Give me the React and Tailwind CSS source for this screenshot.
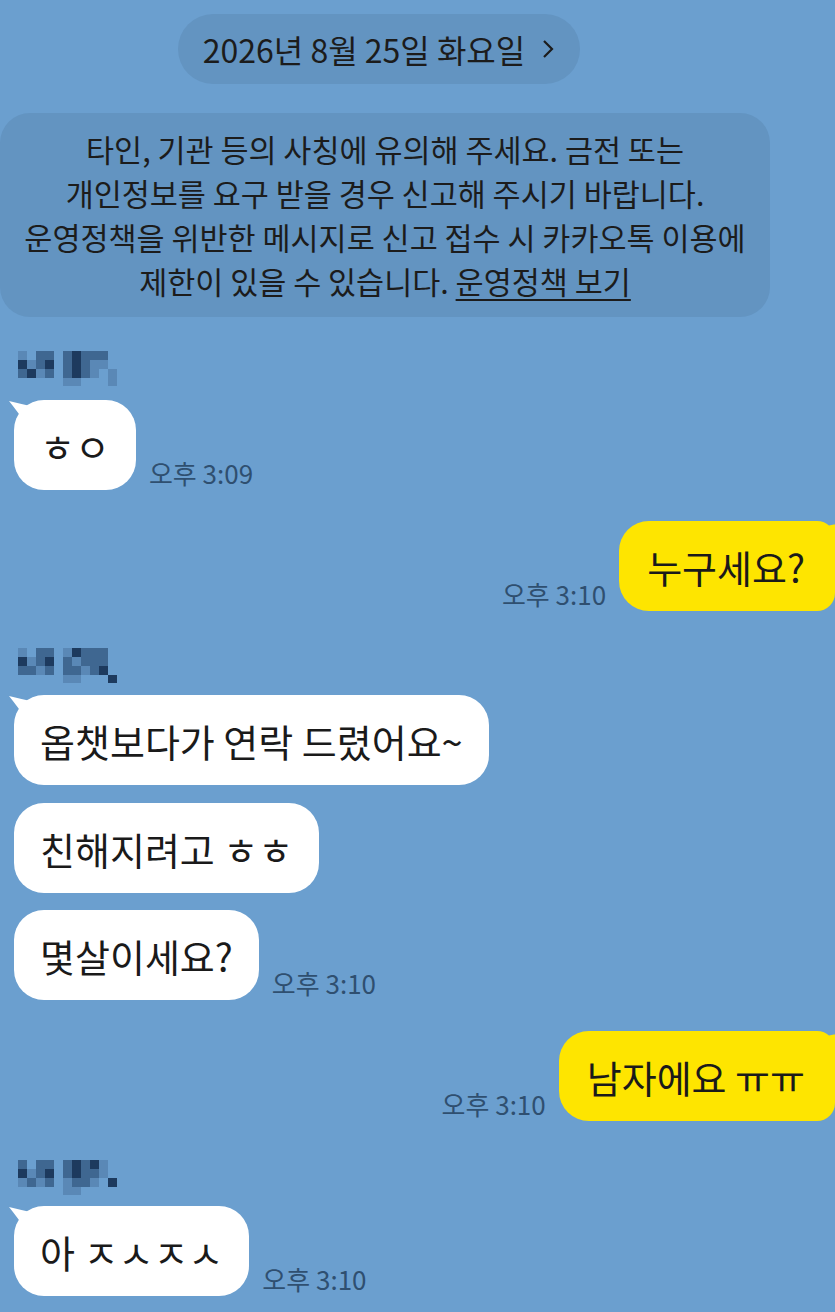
import React from 'react';

const FONT = { fontFamily: '"Noto Sans CJK KR", "Noto Sans", sans-serif' };

// mosaic name blocks (blurred sender name)
const C = {
  b: 'bg-[#6b9fcf]',
  l: 'bg-[#5a88b6]',
  m: 'bg-[#3f6791]',
  d: 'bg-[#1d3a5e]',
};

const names = [
  ['lbmmbmdmmmb', 'dlmdbmdmllb', 'mdlmbmdmlbl', 'bbbbbllbbbl'],
  ['lbmmbldmmmb', 'dlmdbmlmmmb', 'mmlmbmmlmdb', 'bbbbbllbbbd'],
  ['mbmmbmdmdlb', 'dlmdbmdmmlb', 'lmlmblmmlbd', 'bbbbbllbbbb'],
];

function Mosaic({ rows }) {
  return (
    <div className="flex flex-col ml-[18px]">
      {rows.map((r, i) => (
        <div key={i} className="flex">
          {r.split('').map((c, j) => (
            <div key={j} className={`w-[9px] ${i === 3 ? 'h-[8px]' : 'h-[9px]'} ${C[c]}`} />
          ))}
        </div>
      ))}
    </div>
  );
}

function Tail() {
  return (
    <svg className="absolute left-[-5px] top-[1px]" width="26" height="24" viewBox="0 0 26 24">
      <path d="M0 0 Q12 3 26 6 L18 24 Q8 10 0 0Z" fill="#ffffff" />
    </svg>
  );
}

function Time({ children }) {
  return <span className="block text-[26px] leading-none text-[#2f4f70] pb-[4px] whitespace-nowrap">{children}</span>;
}

function Left({ text, time, tail, className = '' }) {
  return (
    <div className={`flex items-end ${className}`}>
      <div className="relative ml-[14px]">
        {tail && <Tail />}
        <div className="relative h-[90px] flex items-center px-[26px] rounded-[30px] bg-white text-[38px] text-[#1a1a1a] whitespace-nowrap">
          {text}
        </div>
      </div>
      {time && <div className="ml-[13px]"><Time>{time}</Time></div>}
    </div>
  );
}

function Right({ text, time, className = '' }) {
  return (
    <div className={`flex items-end justify-end ${className}`}>
      <div className="mr-[13px]"><Time>{time}</Time></div>
      <div className="relative">
        <svg className="absolute right-[-14px] top-[0px]" width="26" height="24" viewBox="0 0 26 24">
          <path d="M26 0 Q14 3 0 6 L8 24 Q18 10 26 0Z" fill="#fee500" />
        </svg>
        <div className="relative h-[90px] flex items-center pl-[28px] pr-[30px] rounded-l-[30px] rounded-r-[18px] bg-[#fee500] text-[38px] text-[#1a1a1a] whitespace-nowrap">
          {text}
        </div>
      </div>
    </div>
  );
}

export default function App() {
  return (
    <div className="w-[835px] h-[1312px] overflow-hidden bg-[#6b9fcf] flex flex-col" style={FONT}>
      <div className="flex justify-start mt-[14px] ml-[178px]">
        <div className="h-[70px] w-[402px] rounded-full bg-[#6394c1] flex items-center justify-center gap-[16px] text-[32px] text-[#1c1c1c]">
          <span>2026년 8월 25일 화요일</span>
          <svg width="14" height="22" viewBox="0 0 14 22">
            <path d="M3 3 L11 11 L3 19" fill="none" stroke="#1c1c1c" strokeWidth="2.2" />
          </svg>
        </div>
      </div>

      <div className="mt-[29px] w-[770px] rounded-[30px] bg-[#6394c1] py-[14px] text-center text-[30.5px] leading-[44px] text-[#1c1c1c]">
        <p>타인, 기관 등의 사칭에 유의해 주세요. 금전 또는</p>
        <p>개인정보를 요구 받을 경우 신고해 주시기 바랍니다.</p>
        <p className="whitespace-nowrap">운영정책을 위반한 메시지로 신고 접수 시 카카오톡 이용에</p>
        <p>
          제한이 있을 수 있습니다. <span className="underline underline-offset-[5px] decoration-2">운영정책 보기</span>
        </p>
      </div>

      <div className="mt-[34px]"><Mosaic rows={names[0]} /></div>
      <Left className="mt-[14px]" text="ㅎㅇ" time="오후 3:09" tail />

      <Right className="mt-[31px]" text="누구세요?" time="오후 3:10" />

      <div className="mt-[37px]"><Mosaic rows={names[1]} /></div>
      <Left className="mt-[12px]" text="옵챗보다가 연락 드렸어요~" tail />
      <Left className="mt-[18px]" text="친해지려고 ㅎㅎ" />
      <Left className="mt-[17px]" text="몇살이세요?" time="오후 3:10" />

      <Right className="mt-[31px]" text="남자에요 ㅠㅠ" time="오후 3:10" />

      <div className="mt-[39px]"><Mosaic rows={names[2]} /></div>
      <Left className="mt-[11px]" text="아 ㅈㅅㅈㅅ" time="오후 3:10" tail />
    </div>
  );
}
